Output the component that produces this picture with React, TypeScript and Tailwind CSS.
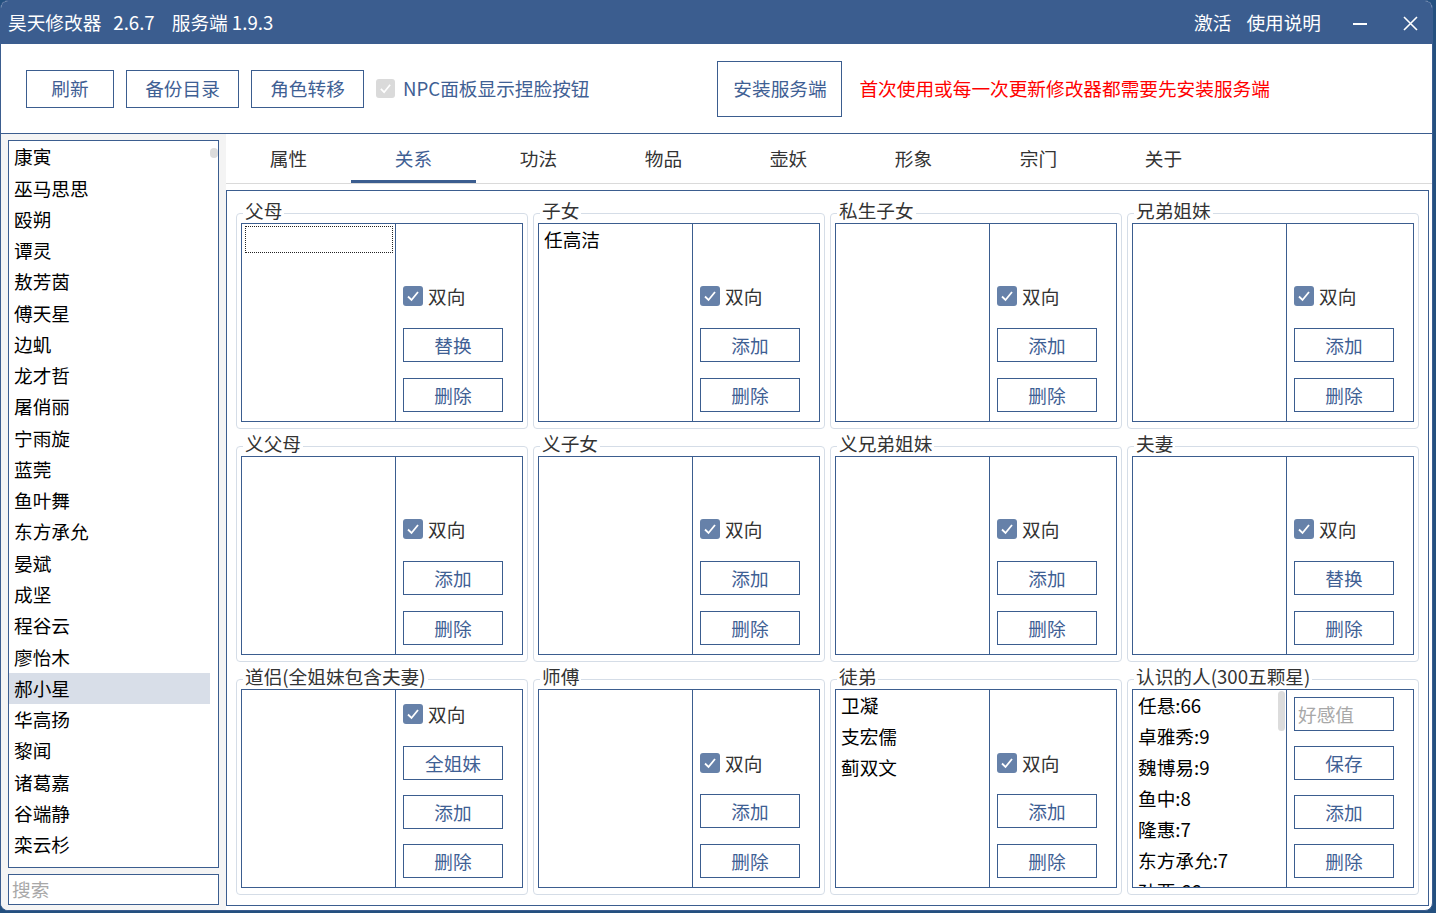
import type { ReactNode } from 'react';

const names = [
  '康寅', '巫马思思', '殴朔', '谭灵', '敖芳茵', '傅天星', '边虮', '龙才哲', '屠俏丽', '宁雨旋', '蓝莞', '鱼叶舞',
  '东方承允', '晏斌', '成坚', '程谷云', '廖怡木', '郝小星', '华高扬', '黎闻', '诸葛嘉', '谷端静', '栾云杉',
];

const tabs = ['属性', '关系', '功法', '物品', '壶妖', '形象', '宗门', '关于'];

const friends = ['任悬:66', '卓雅秀:9', '魏博易:9', '鱼中:8', '隆惠:7', '东方承允:7', '孙要:66'];

function Btn({ children }: { children: ReactNode }) {
  return (
    <div className="w-[100px] h-[34px] border border-[#3b5d8f] flex items-center justify-center text-[#3f6094] leading-none">
      {children}
    </div>
  );
}

function Check() {
  return (
    <div className="flex items-center gap-[5px] h-[20px]">
      <div className="w-[20px] h-[20px] rounded-[3px] bg-[#6681a9] flex items-center justify-center">
        <svg width="14" height="14" viewBox="0 0 14 14">
          <polyline points="2,7.5 5.5,11 12,3" fill="none" stroke="white" strokeWidth="1.8" />
        </svg>
      </div>
      <span className="text-[#333] leading-none">双向</span>
    </div>
  );
}

function Group({
  title,
  items = [],
  focus = false,
  children,
  scroll = false,
}: {
  title: string;
  items?: string[];
  focus?: boolean;
  children: ReactNode;
  scroll?: boolean;
}) {
  return (
    <div className="relative h-[216px] border border-[#d5dde7] rounded-[4px] pt-[9px] pb-[6px] px-[4px]">
      {/* group caption sits on the border */}
      <span className="absolute left-[6px] top-[-14px] px-[2px] bg-white text-[#333] leading-[20px]">{title}</span>
      <div className="h-full border border-[#3b5d8f] flex">
        <div className="relative flex-1 overflow-hidden pl-[5px]">
          {focus && <div className="mt-[2px] ml-[-2px] mr-[2px] h-[27px] border border-dotted border-[#222]" />}
          {items.map((it) => (
            <div key={it} className="h-[31px] flex items-center text-black leading-none">
              {it}
            </div>
          ))}
          {scroll && <div className="absolute right-[1px] top-[1px] w-[7px] h-[40px] rounded-[4px] bg-[#dcdcdc]" />}
        </div>
        <div className="w-[127px] border-l border-[#3b5d8f] pl-[7px] pb-[9px] flex flex-col justify-end">{children}</div>
      </div>
    </div>
  );
}

function Normal({ a }: { a: string }) {
  return (
    <>
      <Check />
      <div className="mt-[22px] flex flex-col gap-[16px]">
        <Btn>{a}</Btn>
        <Btn>删除</Btn>
      </div>
    </>
  );
}

export default function App() {
  return (
    <div className="w-[1436px] h-[913px] bg-[#24507f] font-['Noto_Sans_CJK_SC','Microsoft_YaHei',sans-serif] text-[18.67px]">
      <div className="w-[1433px] h-[911px] border border-[#3b5d8f] rounded-[8px] overflow-hidden bg-white flex flex-col">
        {/* Title bar */}
        <div className="h-[43px] bg-[#3b5d8f] text-white flex items-center justify-between pl-[7px] pr-[14px] leading-none">
          <div className="flex items-center">
            <span>昊天修改器</span>
            <span className="ml-[12px]">2.6.7</span>
            <span className="ml-[17px]">服务端 1.9.3</span>
          </div>
          <div className="flex items-center">
            <span>激活</span>
            <span className="ml-[15px]">使用说明</span>
            <div className="ml-[32px] w-[14px] h-[2px] bg-white mt-[3px]" />
            <svg className="ml-[36px] mt-[3px]" width="15" height="15" viewBox="0 0 15 15">
              <path d="M1 1L14 14M14 1L1 14" stroke="white" strokeWidth="1.6" />
            </svg>
          </div>
        </div>

        {/* Toolbar */}
        <div className="h-[89px] border-b border-[#3b5d8f] flex items-center pl-[25px] box-content">
          <div className="w-[88px] h-[38px] border border-[#3b5d8f] flex items-center justify-center text-[#3f6094] leading-none">刷新</div>
          <div className="ml-[12px] w-[113px] h-[38px] border border-[#3b5d8f] flex items-center justify-center text-[#3f6094] leading-none">备份目录</div>
          <div className="ml-[12px] w-[113px] h-[38px] border border-[#3b5d8f] flex items-center justify-center text-[#3f6094] leading-none">角色转移</div>
          <div className="ml-[12px] w-[19px] h-[19px] rounded-[3px] bg-[#dadada] flex items-center justify-center">
            <svg width="13" height="13" viewBox="0 0 14 14">
              <polyline points="2,7.5 5.5,11 12,3" fill="none" stroke="white" strokeWidth="1.8" />
            </svg>
          </div>
          <span className="ml-[8px] text-[#3f6094] leading-none">NPC面板显示捏脸按钮</span>
          <div className="ml-[128px] w-[125px] h-[56px] border border-[#3b5d8f] flex items-center justify-center text-[#3f6094] leading-none">安装服务端</div>
          <span className="ml-[17px] text-[#ff0000] leading-none">首次使用或每一次更新修改器都需要先安装服务端</span>
        </div>

        {/* Body */}
        <div className="flex-1 flex min-h-0">
          {/* Left list */}
          <div className="w-[225px] bg-[#f4f4f4] flex flex-col pt-[6px] pb-[5px] px-[7px]">
            <div className="relative flex-1 bg-white border border-[#3b5d8f] overflow-hidden">
              {names.map((n) => (
                <div
                  key={n}
                  className={`h-[31.27px] mr-[8px] pl-[5px] flex items-center text-black leading-none ${n === '郝小星' ? 'bg-[#d8dee8]' : ''}`}
                >
                  {n}
                </div>
              ))}
              <div className="absolute right-[0px] top-[7px] w-[8px] h-[10px] rounded-[4px] bg-[#dcdcdc]" />
            </div>
            <div className="mt-[6px] h-[31px] bg-white border border-[#3b5d8f] flex items-center pl-[3px] text-[#a8a8a8] leading-none">搜索</div>
          </div>

          {/* Right area */}
          <div className="flex-1 flex flex-col">
            <div className="h-[50px] border-b border-[#dadada] flex">
              {tabs.map((t) => (
                <div key={t} className="w-[125px] flex flex-col">
                  <div className={`flex-1 flex items-center justify-center leading-none pt-[3px] ${t === '关系' ? 'text-[#3f6094]' : 'text-[#333]'}`}>
                    {t}
                  </div>
                  <div className={`h-[3px] ${t === '关系' ? 'bg-[#3b5d8f]' : ''}`} />
                </div>
              ))}
            </div>
            <div className="mt-[6px] w-[1203px] h-[716px] border border-[#3b5d8f] pt-[22px] px-[9px]">
              <div className="grid grid-cols-[292px_292px_292px_292px] gap-x-[5px] gap-y-[17px]">
                <Group title="父母" focus>
                  <Normal a="替换" />
                </Group>
                <Group title="子女" items={['任高洁']}>
                  <Normal a="添加" />
                </Group>
                <Group title="私生子女">
                  <Normal a="添加" />
                </Group>
                <Group title="兄弟姐妹">
                  <Normal a="添加" />
                </Group>

                <Group title="义父母">
                  <Normal a="添加" />
                </Group>
                <Group title="义子女">
                  <Normal a="添加" />
                </Group>
                <Group title="义兄弟姐妹">
                  <Normal a="添加" />
                </Group>
                <Group title="夫妻">
                  <Normal a="替换" />
                </Group>

                <Group title="道侣(全姐妹包含夫妻)">
                  <Check />
                  <div className="mt-[22px] flex flex-col gap-[15px]">
                    <Btn>全姐妹</Btn>
                    <Btn>添加</Btn>
                    <Btn>删除</Btn>
                  </div>
                </Group>
                <Group title="师傅">
                  <Check />
                  <div className="mt-[21px] flex flex-col gap-[16px]">
                    <Btn>添加</Btn>
                    <Btn>删除</Btn>
                  </div>
                </Group>
                <Group title="徒弟" items={['卫凝', '支宏儒', '蓟双文']}>
                  <Check />
                  <div className="mt-[21px] flex flex-col gap-[16px]">
                    <Btn>添加</Btn>
                    <Btn>删除</Btn>
                  </div>
                </Group>
                <Group title="认识的人(300五颗星)" items={friends} scroll>
                  <div className="w-[100px] h-[34px] border border-[#3b5d8f] flex items-center pl-[3px] text-[#a8a8a8] leading-none">好感值</div>
                  <div className="mt-[15px] flex flex-col gap-[15px]">
                    <Btn>保存</Btn>
                    <Btn>添加</Btn>
                    <Btn>删除</Btn>
                  </div>
                </Group>
              </div>
            </div>
          </div>
        </div>
      </div>
    </div>
  );
}
